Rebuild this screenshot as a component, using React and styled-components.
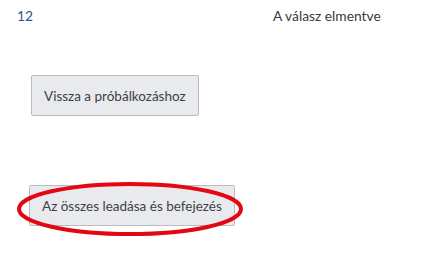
import React from "react";
import styled, { createGlobalStyle } from "styled-components";

const Global = createGlobalStyle`
  html, body { margin: 0; padding: 0; background: #fff; }
  body { font-family: Lato, "Open Sans", sans-serif; color: #343a40; }
`;

const Page = styled.div`
  width: 446px;
  height: 259px;
  overflow: hidden;
  display: flex;
  flex-direction: column;
`;

const Row = styled.div`
  display: flex;
  align-items: baseline;
  padding: 8px 0 0 17px;
  font-size: 13.8px;
  line-height: 16px;
`;

const Num = styled.span`
  width: 256px;
  color: #1d5a8f;
`;

const Status = styled.span`
  color: #343a40;
`;

const ButtonRow = styled.div`
  position: relative;
  display: flex;
  padding-left: ${(p) => p.$left}px;
  margin-top: ${(p) => p.$top}px;
`;

const Button = styled.button`
  font-family: Lato, "Open Sans", sans-serif;
  font-size: 13.5px;
  color: #3c4147;
  background: #e9eaee;
  border: 1px solid #b9bcc0;
  border-radius: 2px;
  height: 41px;
  padding: 0 12px;
  box-sizing: border-box;
  cursor: pointer;
`;

const Ring = styled.svg`
  position: absolute;
  left: 14px;
  top: -5px;
  pointer-events: none;
`;

export default function App() {
  return (
    <Page>
      <Global />
      <Row>
        <Num>12</Num>
        <Status>A válasz elmentve</Status>
      </Row>
      <ButtonRow $left={31} $top={51}>
        <Button>Vissza a próbálkozáshoz</Button>
      </ButtonRow>
      <ButtonRow $left={29} $top={69}>
        <Button>Az összes leadása és befejezés</Button>
        <Ring width="236" height="60" viewBox="0 0 236 60">
          <ellipse cx="116" cy="29" rx="111" ry="25" fill="none" stroke="#e30613" strokeWidth="4" />
        </Ring>
      </ButtonRow>
    </Page>
  );
}
